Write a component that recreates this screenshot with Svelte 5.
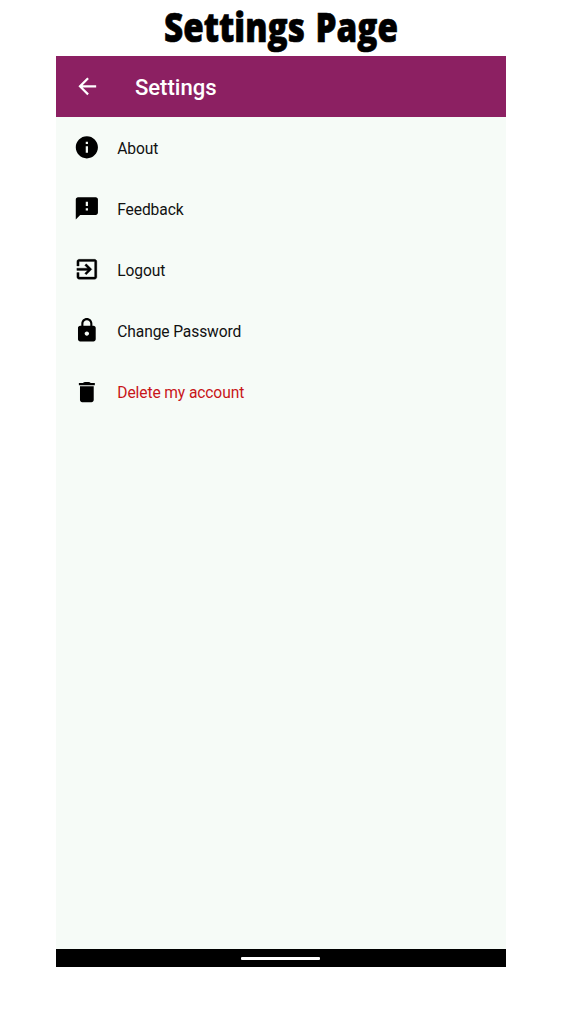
<script>
  const items = [
    { label: 'About', path: 'M12 2C6.48 2 2 6.48 2 12s4.48 10 10 10 10-4.48 10-10S17.52 2 12 2zm1 15h-2v-6h2v6zm0-8h-2V7h2v2z' },
    { label: 'Feedback', path: 'M20 2H4c-1.1 0-1.99.9-1.99 2L2 22l4-4h14c1.1 0 2-.9 2-2V4c0-1.1-.9-2-2-2zm-7 12h-2v-2h2v2zm0-4h-2V6h2v4z' },
    { label: 'Logout', bold: true, path: 'M10.09 15.59L11.5 17l5-5-5-5-1.41 1.41L12.67 11H3v2h9.67l-2.58 2.59zM19 3H5c-1.11 0-2 .9-2 2v4h2V5h14v14H5v-4H3v4c0 1.1.89 2 2 2h14c1.1 0 2-.9 2-2V5c0-1.1-.9-2-2-2z' },
    { label: 'Change Password', path: 'M18 8h-1V6c0-2.76-2.24-5-5-5S7 3.24 7 6v2H6c-1.1 0-2 .9-2 2v10c0 1.1.9 2 2 2h12c1.1 0 2-.9 2-2V10c0-1.1-.9-2-2-2zm-6 9c-1.1 0-2-.9-2-2s.9-2 2-2 2 .9 2 2-.9 2-2 2zm3.1-9H8.9V6c0-1.71 1.39-3.1 3.1-3.1 1.71 0 3.1 1.39 3.1 3.1v2z' },
    { label: 'Delete my account', danger: true, path: 'M5.8 19c0 1.1.9 2 2 2h8.4c1.1 0 2-.9 2-2V6.5H5.8V19zM19.2 3.7H15.5Q14.8 2.7 13.5 2.7h-3Q9.2 2.7 8.5 3.7H4.8v1.9h14.4z' }
  ];
</script>

<main class="page">
  <svg class="title" width="562" height="56" viewBox="0 0 562 56" role="heading" aria-level="1">
    <text x="164" y="41.5" textLength="234" lengthAdjust="spacingAndGlyphs">Settings Page</text>
  </svg>
  <section class="phone">
    <header class="bar">
      <svg class="back" viewBox="0 0 24 24"><path d="M20 11H7.83l5.59-5.59L12 4l-8 8 8 8 1.41-1.41L7.83 13H20v-2z" /></svg>
      <span>Settings</span>
    </header>
    <ul class="list">
      {#each items as item}
        <li class:danger={item.danger}>
          <svg class="icon" class:bold={item.bold} viewBox="-0.5 0 24 24"><path d={item.path} /></svg>
          <span>{item.label}</span>
        </li>
      {/each}
    </ul>
    <footer class="nav"><div class="handle"></div></footer>
  </section>
</main>

<style>
  :global(body) { background: #fff; }
  .page {
    width: 562px;
    height: 1023px;
    overflow: hidden;
    font-family: Roboto, sans-serif;
  }
  .title { display: block; overflow: visible; }
  .title text {
    font-family: "Open Sans", sans-serif;
    font-size: 40.5px;
    font-weight: 800;
    word-spacing: 2.5px;
    fill: #000;
    stroke: #000;
    stroke-width: 0.7px;
  }
  .phone {
    display: flex;
    flex-direction: column;
    width: 449.5px;
    height: 910.5px;
    margin-left: 56.3px;
    background: #f6fbf7;
  }
  .bar {
    display: flex;
    align-items: center;
    box-sizing: border-box;
    height: 60.5px;
    padding-left: 17.4px;
    background: #8c2062;
    color: #fff;
    font-size: 22.1px;
    font-weight: 500;
  }
  .bar span { margin-left: 34.6px; padding-top: 1px; }
  .back { width: 26.6px; height: 26.6px; fill: #fff; }
  .list { flex: 1; margin: 0; padding: 0; list-style: none; }
  li {
    display: flex;
    align-items: center;
    height: 61.2px;
    padding-left: 17.2px;
    color: #111;
    font-size: 15.6px;
    letter-spacing: -0.11px;
  }
  li span { margin-left: 17.2px; padding-top: 3.1px; }
  .danger span { color: #c81519; }
  .icon { width: 26.6px; height: 26.6px; fill: #000; }
  .bold { stroke: #000; stroke-width: 0.3px; }
  .nav {
    display: flex;
    align-items: center;
    justify-content: center;
    height: 17.4px;
    background: #000;
  }
  .handle {
    width: 79px;
    height: 3px;
    margin: 2px 1px 0 0;
    border-radius: 1px;
    background: #fff;
  }
</style>
